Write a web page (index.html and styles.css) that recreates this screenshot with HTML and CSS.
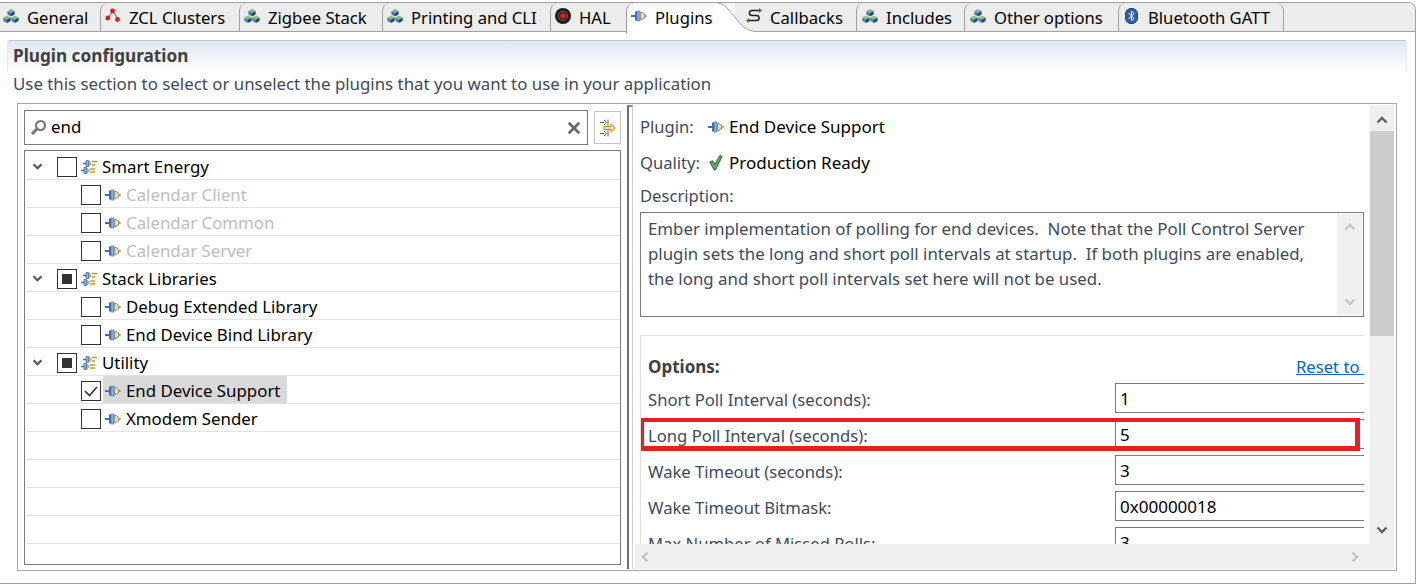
FILE: index.html
```html
<!DOCTYPE html>
<html lang="en">
<head>
<meta charset="utf-8">
<title>Plugin configuration</title>
<link rel="stylesheet" href="styles.css">
</head>
<body>
<svg class="defs" width="0" height="0" aria-hidden="true">
  <defs>
    <symbol id="cubes" viewBox="0 0 16 16">
      <path d="M8 1l3.600 2L8 5 4.400 3z" fill="#86b58c"/><path d="M4.400 3L8 5v3.600L4.400 6.600z" fill="#3f7f9a"/><path d="M11.600 3L8 5v3.600l3.600-2z" fill="#1f4a6e"/>
      <path d="M4 7.500l3.600 2L4 11.500.4 9.500z" fill="#8fbf7f"/><path d="M.4 9.500L4 11.500V15L.4 13z" fill="#3f86a8"/><path d="M7.600 9.500L4 11.500V15l3.600-2z" fill="#1f4a6e"/>
      <path d="M12 7.500l3.600 2-3.600 2-3.600-2z" fill="#8fbf7f"/><path d="M8.400 9.500l3.600 2V15l-3.600-2z" fill="#3f86a8"/><path d="M15.600 9.500l-3.600 2V15l3.600-2z" fill="#1f4a6e"/>
    </symbol>
    <symbol id="zcl" viewBox="0 0 16 16">
      <path d="M8 3L3 10M8 3l5 8" stroke="#555" stroke-width="1" fill="none"/>
      <circle cx="7.500" cy="3" r="2.400" fill="#e8141c"/><circle cx="2.800" cy="10" r="2.400" fill="#e8141c"/><circle cx="12.500" cy="11.500" r="2.400" fill="#e8141c"/>
    </symbol>
    <symbol id="hal" viewBox="0 0 16 16">
      <circle cx="8" cy="8" r="8" fill="#1c1c1c"/><circle cx="8" cy="8" r="5" fill="#6a6a6a"/><circle cx="8" cy="8" r="4" fill="#4a0c0c"/><circle cx="8" cy="8" r="2.800" fill="#ee1a20"/>
    </symbol>
    <symbol id="plug" viewBox="0 0 16 16">
      <path d="M0 8h5" stroke="#3f6fb5" stroke-width="2"/><rect x="4" y="3.500" width="2" height="9" fill="#3f6fb5"/><rect x="6" y="3" width="3" height="10" fill="#8fb0dc" stroke="#3f6fb5" stroke-width=".6"/>
      <path d="M9.300 4.500h1.700l3 2.500v2l-3 2.500H9.300z" fill="#e6dfc0" stroke="#7f7a50" stroke-width=".9"/><path d="M13.500 8H16" stroke="#7f7a50"/>
    </symbol>
    <symbol id="plugs" viewBox="0 0 16 16">
      <path d="M2 4.500h3" stroke="#3f6fb5" stroke-width="1.500"/><path d="M5 1.500h2.500v6H5z" fill="#8fb0dc" stroke="#3f6fb5" stroke-width=".8"/><path d="M8 2.500l2 1.200v1.600L8 6.500z" fill="#e6dfc0" stroke="#7f7a50" stroke-width=".7"/><path d="M11 2.500h5M11 6h3" stroke="#c09a3a" stroke-width="1.300"/>
      <path d="M0 11.500h3" stroke="#3f6fb5" stroke-width="1.500"/><path d="M3 8.500h2.500v6H3z" fill="#8fb0dc" stroke="#3f6fb5" stroke-width=".8"/><path d="M6 9.500l2 1.200v1.600L6 13.500z" fill="#e6dfc0" stroke="#7f7a50" stroke-width=".7"/><path d="M9 10h5M9 13h5" stroke="#c09a3a" stroke-width="1.300"/>
    </symbol>
    <symbol id="callback" viewBox="0 0 16 16">
      <path d="M14 2.500H6C2.500 2.500 2.500 7.500 6 7.500h4.500c3.500 0 3.500 5 0 5H3" fill="none" stroke="#1a1a1a" stroke-width="1.400"/>
      <path d="M13 0l3 2.500L13 5z" fill="#2060e0"/><path d="M3 10l-3 2.500L3 15z" fill="#1f8a2a"/>
    </symbol>
    <symbol id="bt" viewBox="0 0 13 16">
      <rect x=".5" y=".5" width="12" height="15" rx="5.500" fill="#2c5fa8" stroke="#1d3f75"/>
      <path d="M3.500 5l5.500 5.500-2.500 2.500V3l2.500 2.500L3.500 11" fill="none" stroke="#fff" stroke-width="1"/>
    </symbol>
    <symbol id="ok" viewBox="0 0 14 17">
      <path d="M.5 7.500L3.500 6l2.500 4L11 .5l2.500 1L6.500 16H5z" fill="#55b060" stroke="#1d4a2a" stroke-width=".9"/>
    </symbol>
    <symbol id="up" viewBox="0 0 12 8"><path d="M1.500 6.500L6 2l4.500 4.500" fill="none" stroke="currentColor" stroke-width="2.400"/></symbol>
    <symbol id="down" viewBox="0 0 12 8"><path d="M1.500 1.500L6 6l4.500-4.500" fill="none" stroke="currentColor" stroke-width="2.400"/></symbol>
    <symbol id="left" viewBox="0 0 8 12"><path d="M6.500 1.500L2 6l4.500 4.500" fill="none" stroke="currentColor" stroke-width="2.400"/></symbol>
    <symbol id="right" viewBox="0 0 8 12"><path d="M1.500 1.500L6 6l-4.500 4.500" fill="none" stroke="currentColor" stroke-width="2.400"/></symbol>
  </defs>
</svg>

<div class="frame">
  <div class="tabs">
    <div class="tab t-general"><svg class="ico"><use href="#cubes"/></svg><span>General</span></div>
    <div class="tab t-zcl"><svg class="ico"><use href="#zcl"/></svg><span>ZCL Clusters</span></div>
    <div class="tab t-stack"><svg class="ico"><use href="#cubes"/></svg><span>Zigbee Stack</span></div>
    <div class="tab t-print"><svg class="ico"><use href="#cubes"/></svg><span>Printing and CLI</span></div>
    <div class="tab t-hal"><svg class="ico"><use href="#hal"/></svg><span>HAL</span></div>
    <div class="tab t-plugins active"><svg class="ico"><use href="#plug"/></svg><span>Plugins</span>
      <svg class="curve" width="42" height="31" viewBox="0 0 42 31"><path d="M0 1C7 1 10 3 14 7L24 19C29 25 33 29 42 29.500V31H0z" fill="#fff"/><path d="M0 .5C7 .5 10 3 14 7L24 19C29 25 33 29 42 29.500" fill="none" stroke="#a0a0a0"/></svg>
    </div>
    <div class="tab t-callbacks"><svg class="ico"><use href="#callback"/></svg><span>Callbacks</span></div>
    <div class="tab t-includes"><svg class="ico"><use href="#cubes"/></svg><span>Includes</span></div>
    <div class="tab t-other"><svg class="ico"><use href="#cubes"/></svg><span>Other options</span></div>
    <div class="tab t-bt"><svg class="ico ico-bt"><use href="#bt"/></svg><span>Bluetooth GATT</span></div>
    <div class="tabs-rest"></div>
  </div>

  <div class="page">
    <div class="head">Plugin configuration</div>
    <p class="sub">Use this section to select or unselect the plugins that you want to use in your application</p>

    <div class="panel">
      <div class="left">
        <div class="searchbar">
          <div class="search">
            <svg class="search-ico" viewBox="0 0 17 17"><circle cx="10.500" cy="6.500" r="4.500" fill="none" stroke="#777" stroke-width="2.200"/><path d="M7 10l-5 5" stroke="#777" stroke-width="3"/></svg>
            <span class="search-text">end</span>
            <svg class="search-x" viewBox="0 0 12 12"><path d="M1.500 1.500l9 9M10.500 1.500l-9 9" stroke="#666" stroke-width="2.200"/></svg>
          </div>
          <div class="filter-btn">
            <svg viewBox="0 0 16 18" width="16" height="18"><path d="M0 3.500h4M4 1l2.500 2.500L4 6M8 .5v6M0 14.500h4M4 12l2.500 2.500L4 17M8 11.500v6" fill="none" stroke="#555"/><path d="M4 7.500h7V5l4 4-4 4v-2.500H4z" fill="#fbe6a8" stroke="#c08a1a"/></svg>
          </div>
        </div>
        <div class="tree">
          <div class="row l0"><svg class="twist"><use href="#down"/></svg><i class="cb"></i><svg class="ico-s"><use href="#plugs"/></svg><span>Smart Energy</span></div>
          <div class="row l1 off"><i class="cb"></i><svg class="ico-s"><use href="#plug"/></svg><span>Calendar Client</span></div>
          <div class="row l1 off"><i class="cb"></i><svg class="ico-s"><use href="#plug"/></svg><span>Calendar Common</span></div>
          <div class="row l1 off"><i class="cb"></i><svg class="ico-s"><use href="#plug"/></svg><span>Calendar Server</span></div>
          <div class="row l0"><svg class="twist"><use href="#down"/></svg><i class="cb mixed"></i><svg class="ico-s"><use href="#plugs"/></svg><span>Stack Libraries</span></div>
          <div class="row l1"><i class="cb"></i><svg class="ico-s"><use href="#plug"/></svg><span>Debug Extended Library</span></div>
          <div class="row l1"><i class="cb"></i><svg class="ico-s"><use href="#plug"/></svg><span>End Device Bind Library</span></div>
          <div class="row l0"><svg class="twist"><use href="#down"/></svg><i class="cb mixed"></i><svg class="ico-s"><use href="#plugs"/></svg><span>Utility</span></div>
          <div class="row l1"><i class="cb"><svg viewBox="0 0 18 18"><path d="M3 9l4.500 4.500L15 5" fill="none" stroke="#333" stroke-width="1.600"/></svg></i><div class="sel"><svg class="ico-s"><use href="#plug"/></svg><span>End Device Support</span></div></div>
          <div class="row l1"><i class="cb"></i><svg class="ico-s"><use href="#plug"/></svg><span>Xmodem Sender</span></div>
          <div class="row"></div>
          <div class="row"></div>
          <div class="row"></div>
          <div class="row"></div>
        </div>
      </div>

      <div class="sash"></div>

      <div class="right">
        <div class="main">
          <div class="info"><span class="lbl">Plugin:</span><svg class="ico-s"><use href="#plug"/></svg><span class="val">End Device Support</span></div>
          <div class="info"><span class="lbl">Quality:</span><svg class="ico-s"><use href="#ok"/></svg><span class="val">Production Ready</span></div>
          <div class="desc-lbl">Description:</div>
          <div class="desc">
            <p>Ember implementation of polling for end devices.&nbsp; Note that the Poll Control Server plugin sets the long and short poll intervals at startup.&nbsp; If both plugins are enabled, the long and short poll intervals set here will not be used.</p>
            <div class="desc-bar"><svg class="arr"><use href="#up"/></svg><svg class="arr"><use href="#down"/></svg></div>
          </div>
          <div class="options">
            <div class="opt-head"><b>Options:</b><a class="reset" href="#">Reset to defaults</a></div>
            <div class="opt"><span>Short Poll Interval (seconds):</span><div class="field">1</div></div>
            <div class="opt"><span>Long Poll Interval (seconds):</span><div class="field">5</div></div>
            <div class="opt"><span>Wake Timeout (seconds):</span><div class="field">3</div></div>
            <div class="opt"><span>Wake Timeout Bitmask:</span><div class="field">0x00000018</div></div>
            <div class="opt"><span>Max Number of Missed Polls:</span><div class="field">3</div></div>
            <div class="mark"></div>
          </div>
        </div>
        <div class="vbar">
          <svg class="arr dark"><use href="#up"/></svg>
          <div class="thumb"></div>
          <svg class="arr dark"><use href="#down"/></svg>
        </div>
        <div class="hbar"><svg class="arr-h"><use href="#left"/></svg><svg class="arr-h"><use href="#right"/></svg></div>
      </div>
    </div>
  </div>
</div>
</body>
</html>
```
FILE: styles.css
```css
* { box-sizing: border-box; }
html, body { margin: 0; padding: 0; height: 584px; overflow: hidden; background: #fff; }
body { font-family: "Noto Sans", "Open Sans", sans-serif; font-size: 16.85px; color: #000; }
.defs { position: absolute; }
p { margin: 0; }

.frame {
  width: 1416px; height: 582px; margin-top: 2px;
  border: 1px solid #a0a0a0; border-left: 0; border-top-right-radius: 8px;
  display: flex; flex-direction: column; overflow: hidden;
}

/* tabs */
.tabs { flex: 0 0 29px; display: flex; background: #ececec; font-size: 16.65px; }
.tab {
  position: relative; display: flex; align-items: center; gap: 8px; height: 29px;
  padding-left: 4px; border-left: 1px solid #a0a0a0; border-bottom: 1px solid #a0a0a0;
  border-top-left-radius: 8px; background: #ececec;
}
.tab .ico { width: 16px; height: 16px; flex: none; margin-top: -3px; }
.tab .ico-bt { width: 13px; margin-right: 2px; margin-left: 1px; }
.tab span { white-space: nowrap; }
.t-general { width: 100px; padding-left: 3px; border-left: 0; }
.t-zcl { width: 139px; }
.t-stack { width: 143px; }
.t-print { width: 168px; }
.t-hal { width: 76px; }
.t-plugins { width: 109px; }
.t-callbacks { width: 121px; border-left: 0; padding-left: 11px; border-top-left-radius: 0; }
.t-includes { width: 108px; padding-left: 5px; }
.t-other { width: 154px; padding-left: 5px; }
.t-bt { width: 166px; padding-left: 5px; border-right: 1px solid #a0a0a0; border-top-right-radius: 8px; }
.tabs-rest { flex: 1; border-bottom: 1px solid #a0a0a0; }
.active {
  height: 31px; margin-bottom: -2px; padding-bottom: 2px; z-index: 2; border-bottom: 0;
  background: linear-gradient(#f4f4f4, #fff 40%);
}
.curve { position: absolute; left: 87px; top: -1px; }

/* page */
.page { flex: 1; min-height: 0; padding: 8px 8px 0 7px; display: flex; flex-direction: column; }
.head {
  height: 32px; padding: 3px 0 0 5px;
  font-size: 17.2px; font-weight: 700; color: #404040; line-height: 24px;
  border: 1px solid #b9c6d6; border-bottom: 0; border-left-color: #e4e9f0; border-right-color: #e4e9f0;
  border-radius: 3px 3px 0 0;
  background: linear-gradient(#dfe7f2, #fff);
}
.sub { height: 31px; padding-left: 6px; line-height: 24px; color: #404a5a; font-size: 16.85px; }

.panel {
  width: 1380px; height: 468px; margin-left: 10px;
  border: 1px solid #a8a8a8; padding: 1px 0 0 6px;
  display: flex;
}

/* left */
.left { width: 597px; flex: none; margin-right: 6px; padding-top: 5px; display: flex; flex-direction: column; }
.searchbar { display: flex; justify-content: space-between; height: 35px; }
.search {
  width: 564px; border: 1px solid #7a7a7a; display: flex; align-items: center;
  padding: 0 6px 0 5px;
}
.search-ico { width: 17px; height: 17px; flex: none; }
.search-text { margin-left: 4px; flex: 1; padding-bottom: 2px; }
.search-x { width: 14px; height: 14px; flex: none; }
.filter-btn {
  width: 27px; height: 33px; margin-top: 1px; border: 1px solid #c4c4c4;
  display: flex; align-items: center; justify-content: center;
}
.tree {
  height: 415px; margin-top: 5px; border: 1px solid #7a7a7a; padding: 1px 0 0 0; overflow: hidden;
}
.row {
  height: 28px; display: flex; align-items: center; position: relative; padding-top: 3px;
  border-bottom: 1px solid #e2e2e2; margin-left: 1px; white-space: nowrap;
}
.l0 { padding-left: 31px; gap: 4px; }
.l1 { padding-left: 55px; gap: 4px; }
.off span { color: #bdbdbd; }
.twist { position: absolute; left: 6px; top: 11px; width: 11px; height: 7px; color: #555; }
.cb {
  display: block; flex: none; width: 20px; height: 20px; border: 1px solid #333; background: #fff;
}
.cb svg { display: block; width: 18px; height: 18px; }
.mixed { padding: 4px; }
.mixed::before { content: ""; display: block; width: 10px; height: 10px; background: #333; }
.ico-s { width: 16px; height: 16px; flex: none; }
.row span { padding: 0 0 2px 1px; }
.sel {
  display: flex; align-items: center; gap: 4px; align-self: stretch;
  width: 184px; margin: -3px 0 0 -2px; padding: 3px 0 0 2px; background: #d9d9d9;
}

.sash {
  width: 6px; height: 464px; flex: none;
  border-left: 2px solid #6e6e6e; border-top: 2px solid #8a8a8a; border-right: 1px solid #cfcfcf;
}

/* right */
.right {
  width: 761px; height: 465px; flex: none;
  display: grid; grid-template-columns: 737px 24px; grid-template-rows: 439px 25px;
}
.main { padding: 4px 0 0 7px; overflow: hidden; }
.info { height: 36px; width: 724px; display: flex; align-items: center; color: #000; font-size: 17px; }
.info span { padding-bottom: 2px; }
.lbl { width: 68px; color: #404a5a; font-size: 16.6px; }
.info .ico-s { margin-right: 5px; }
.desc-lbl { height: 31px; line-height: 29px; color: #404a5a; width: 724px; font-size: 16.6px; }
.desc {
  width: 724px; height: 105px; border: 1px solid #7a7a7a; padding: 1px 1px 1px 7px;
  display: flex; color: #404a5a; line-height: 25px;
}
.desc p { flex: 1; padding-top: 2px; padding-right: 22px; }
.desc-bar {
  flex: 0 0 25px; background: #efefef; color: #c4c4c4;
  display: flex; flex-direction: column; justify-content: space-between; align-items: center; padding: 9px 0;
}
.arr { display: block; width: 12px; height: 8px; flex: none; }
.options {
  position: relative; width: 724px; height: 240px; margin-top: 18px; overflow: hidden;
  border-top: 1px solid #e0e0e0; border-left: 1px solid #e0e0e0; padding: 14px 0 0 7px; color: #404a5a; font-size: 16.65px;
}
.opt-head { height: 33px; display: flex; align-items: center; }
.opt-head b { width: 467px; flex: none; color: #404040; font-size: 17px; }
.reset { color: #0066cc; text-decoration: underline; margin-left: 181px; white-space: nowrap; flex: none; }
.opt { height: 36px; display: flex; align-items: flex-start; }
.opt span { width: 467px; flex: none; line-height: 33px; }
.field {
  width: 400px; flex: none; height: 30px; border: 1px solid #7a7a7a; padding-left: 4px; line-height: 30px; color: #000; font-size: 17px;
}
.mark {
  position: absolute; left: -2px; top: 82px; width: 721px; height: 33px;
  border: 5px solid #ed1c24; border-top-width: 4px;
}
.vbar {
  grid-row: 1 / 3; grid-column: 2; background: #efefef; display: flex; flex-direction: column; align-items: center;
  padding: 11px 0 34px;
}
.dark { color: #606060; }
.thumb { width: 24px; height: 205px; margin: 7px 0 190px; background: #cdcdcd; }
.hbar {
  margin-left: 2px; background: #efefef; color: #c4c4c4;
  display: flex; justify-content: space-between; align-items: center; padding: 0 11px 0 6px;
}
.arr-h { width: 8px; height: 12px; }
```
